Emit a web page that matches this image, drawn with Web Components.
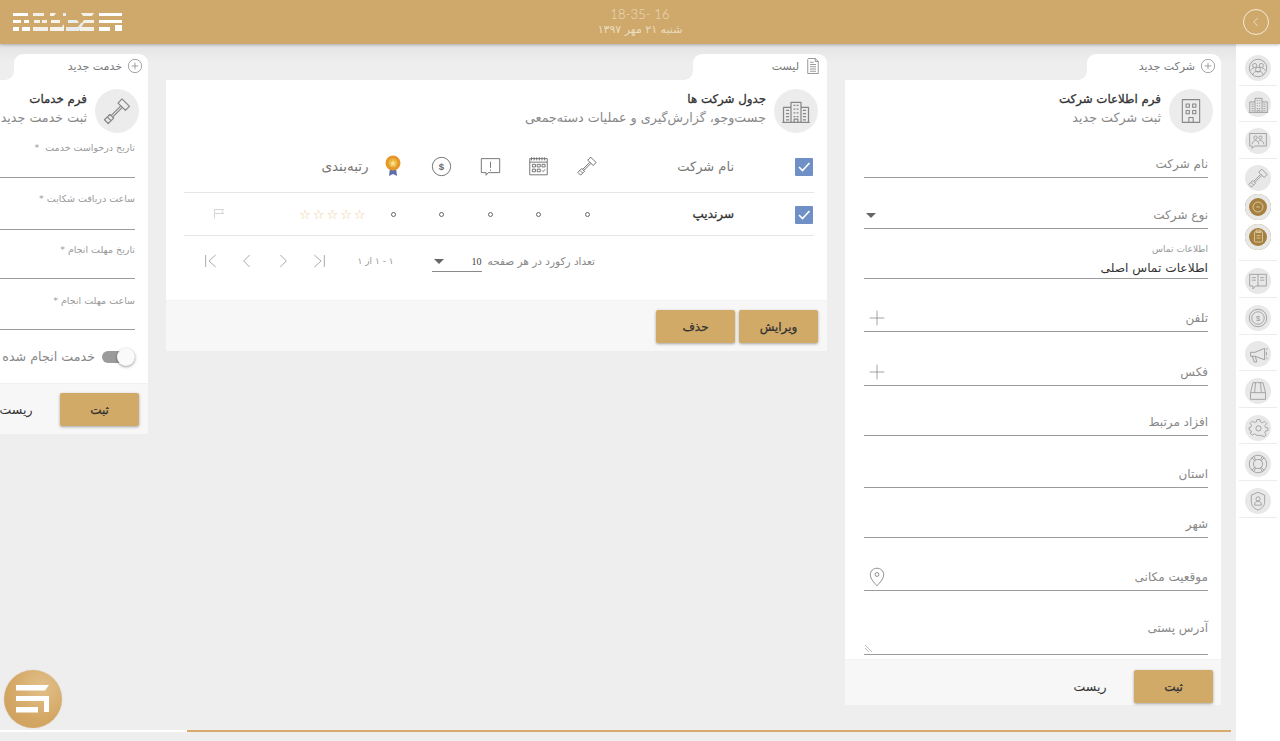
<!DOCTYPE html>
<html lang="fa">
<head>
<meta charset="utf-8">
<title>شرکت ها</title>
<style>
html,body{margin:0;height:741px;overflow:hidden;background:#eeeeee}
body{font-family:"DejaVu Sans",sans-serif;color:#444}
</style>
</head>
<body>
<crm-app></crm-app>
<script>
const ICONS={
hammer:'<path d="M12.800 5.700 16 2.300l6 6-3.300 3.100z"/><path d="M14.900 8.100 7.300 15.700M16.100 9.300 8.500 16.900"/><path d="M6.300 14.700 2 19l3 3 4.300-4.300zM4.500 17l2.500 2.500"/>',
plusc:'<circle cx="12" cy="12" r="10"/><path d="M12 7v10M7 12h10"/>',
doc:'<path d="M6 2h9l4 4v16H5V3z"/><path d="M15 2v4h4M8 7h5M8 10h8M8 13h8M8 16h8M8 19h8"/>',
towers:'<path d="M8 21V5h8v16M2 21V9h6M16 9h6v12M1 21h22"/><path d="M10 7.500h1.500M12.500 7.500H14M10 10.500h1.500M12.500 10.500H14M10 13.500h1.500M12.500 13.500H14M10 16.500h1.500M12.500 16.500H14M4 11.500h2.500M4 14h2.500M4 16.500h2.500M4 19h2.500M17.500 11.500H20M17.500 14H20M17.500 16.500H20M17.500 19H20M10.500 21v-2.500h3V21"/>',
building:'<path d="M4 1.500h16v21H4z"/><path d="M7.500 5.500h3v3h-3zM13.500 5.500h3v3h-3zM7.500 11.500h3v3h-3zM13.500 11.500h3v3h-3zM10 22.500v-4.500h4v4.500"/>',
users:'<circle cx="12" cy="12" r="10.500"/><circle cx="8" cy="9" r="2.500"/><circle cx="16" cy="9" r="2.500"/><circle cx="12" cy="14" r="3"/><path d="M6 20c0-3 3-4 6-4s6 1 6 4M3.500 15c.5-2 2-3 3.500-3M20.500 15c-.5-2-2-3-3.500-3"/>',
chatusers:'<path d="M2 3h20v15H8l-3 3v-3H2z"/><circle cx="9" cy="8" r="2"/><circle cx="15" cy="8" r="2"/><path d="M5 16c0-3 2-4.500 4-4.500s4 1.500 4 4.500M12.500 12.500c.7-.7 1.500-1 2.500-1 2 0 4 1.500 4 4.500"/>',
coin:'<circle cx="12" cy="12" r="6"/><path d="M10 12h4"/>',
clip:'<rect x="7" y="6" width="10" height="13" rx="1"/><path d="M9 4h6v3H9zM9.500 11h5M9.500 14h5"/>',
book:'<path d="M2 4h20v14H9l-3 3.500V18H2zM12 4v14"/><path d="M4.500 8h5M4.500 11h5M14.500 8h5M14.500 11h5"/>',
dollar:'<circle cx="12" cy="12" r="10.500"/><text x="12" y="16" font-size="11" font-weight="700" font-family="Liberation Sans" text-anchor="middle" fill="currentColor" stroke="none">$</text>',
dollar2:'<circle cx="12" cy="12" r="10.500"/><circle cx="12" cy="12" r="7.500"/><text x="12" y="15.500" font-size="9" font-family="Liberation Sans" text-anchor="middle" fill="currentColor" stroke="none">$</text>',
mega:'<path d="M3 9.500h5L19 5v13L8 14H3z"/><path d="M5 14l2 6.500h3L8.500 14.500M21 9v4M20.500 6.500l2-1.500M20.500 15.500l2 1.500"/>',
box:'<path d="M6 2h12l3 12v8H3v-8zM3 14h18M9 2l-1 12M15 2l1 12"/>',
gear:'<path d="M10 2h4l.6 3 2.400 1 2.600-1.700 2.800 2.800L20 9.700l1 2.300 3 .4v3.400l-3 .6-1 2.400 1.700 2.600-2.800 2.800L17.300 22l-2.300 1-.6-1h-4.800l-.6-1-2.300-1-2.600 1.700-2.800-2.800L3.100 18l-1-2.400-2-.6V12l2-.4 1-2.300L1.400 6.700l2.800-2.800L6.800 5.600 9.400 5z" transform="translate(1.200 1.200) scale(.9)"/><circle cx="12" cy="13" r="3"/>',
buoy:'<circle cx="12" cy="12" r="10.500"/><circle cx="12" cy="12" r="5.500"/><path d="m4.600 4.600 3.500 3.500M19.400 4.600l-3.500 3.500M4.600 19.400l3.500-3.500M19.400 19.400l-3.500-3.500M7 2.800l2 4.400M17 2.800l-2 4.400M7 21.200l2-4.400M17 21.200l-2-4.400"/>',
shield:'<path d="M12 1.500 20 5v8c0 5-3.500 8-8 10-4.500-2-8-5-8-10V5z"/><circle cx="12" cy="9.500" r="2.500"/><path d="M8 17v-1.500c0-2 1.800-3 4-3s4 1 4 3V17z"/>',
calendar:'<rect x="2" y="3" width="20" height="18.500"/><path d="M2 7h20M4 1.500V5M7 1.500V5M10 1.500V5M13 1.500V5M16 1.500V5M19 1.500V5"/><path d="M5 9.500h3.500v3H5zM10.500 9.500H14v3h-3.500zM16 9.500h3.500v3H16zM5 15h3.500v3H5zM10.500 15H14v3h-3.500zM16 16.500l1.300 1.300 2.200-2.600"/>',
alert:'<path d="M1.500 3h21v16H9.500l-2.500 3v-3H1.500z"/><path d="M12 6.500v7M12 15.500v1.500"/>',
flag:'<path d="M3 3h18l-3 4 3 4H4M3 3v18"/>',
pin:'<path d="M12 1.500c-4.500 0-8 3.300-8 7.700 0 5 4.500 9.500 8 13.300 3.500-3.800 8-8.300 8-13.300 0-4.400-3.500-7.700-8-7.700z"/><circle cx="12" cy="9" r="2.300"/>',
plus:'<path d="M12 1v22M1 12h22"/>',
first:'<path d="M4 3v18M19 3 9 12l10 9"/>',
prev:'<path d="M16 3 7 12l9 9"/>',
next:'<path d="m8 3 9 9-9 9"/>',
last:'<path d="M20 3v18M5 3l10 9-10 9"/>',
chev:'<path d="m14.500 6-6 6 6 6"/>'
};
function shadow(el,html){el.attachShadow({mode:'open'}).innerHTML=html;}

class SIcon extends HTMLElement{
  connectedCallback(){
    if(this.shadowRoot)return;
    const s=this.getAttribute('size')||20, w=this.getAttribute('sw')||1;
    shadow(this,`<style>:host{display:inline-flex;flex:none;line-height:0;color:inherit}svg{fill:none;stroke:currentColor;stroke-width:${w};stroke-linejoin:round}</style><svg width="${s}" height="${s}" viewBox="0 0 24 24">${ICONS[this.getAttribute('name')]||''}</svg>`);
  }
}
customElements.define('s-icon',SIcon);

class AppHeader extends HTMLElement{
  constructor(){super();shadow(this,`<style>
  :host{display:flex;flex:none;height:44px;background:#cfa96b;box-shadow:0 1px 3px rgba(0,0,0,.25);position:relative;z-index:3;align-items:center;justify-content:space-between;padding:0 11px 0 13px}
  .clock{display:flex;flex-direction:column;align-items:center;color:#ecdcbf;position:absolute;left:530px;width:220px;top:7px}
  .t{font:300 13px/15px Lato,"DejaVu Sans",sans-serif;letter-spacing:.1px;direction:ltr}
  .d{font-size:11px;line-height:16px;direction:rtl}
  .back{width:24px;height:24px;border:1px solid #f5ead6;border-radius:50%;color:#f5ead6;display:flex;align-items:center;justify-content:center}
  </style>
  <svg width="110" height="20" viewBox="0 0 110 20" fill="#fff">
   <path d="M0 1h15v3H0zM0 8h8v3H0zM11 8h5v3h-5zM0 15h6v4H0zM9 15h8v4H9z"/>
   <path d="M20 1h11v3H20zM21 8h6v3h-6zM29 8h5v3h-5zM20 15h15v4H20z" fill="#f3f0ea"/>
   <path d="M37 1h6l-2 3h-4zM38 8h9v3H38zM37 15h12l2-3v7H37z" fill="#f8f4ec"/>
   <path d="M50 1h3v3h-3zM55 8h9l2 3H55zM53 15h12l3-4h3l-5 8H53z" fill="#e9ecef"/>
   <path d="M68 1h13l-2 3H70zM71 8h10v3H69zM67 15h14v4H67z" fill="#f4f1ea"/>
   <path d="M86 1h23v3H86zM86 8h23v3H86zM86 15h11v4H86zM102 13h7v6h-7z"/>
  </svg>
  <div class="clock"><div class="t">18-35- 16</div><div class="d">شنبه ۲۱ مهر ۱۳۹۷</div></div>
  <div class="back"><s-icon name="chev" size="16" sw="1.200"></s-icon></div>`);}
}
customElements.define('app-header',AppHeader);

class SideItem extends HTMLElement{
  constructor(){super();shadow(this,`<style>
  :host{display:flex;height:var(--h,36.600px);align-items:center;justify-content:center;box-sizing:border-box;border-bottom:1px solid var(--line,#ececec);color:#979797;margin:0 3px;padding-top:var(--pt,2px)}
  .c{width:26px;height:26px;border-radius:50%;background:#e8e8e8;display:flex;align-items:center;justify-content:center;flex:none}
  :host([gold]) .c{box-shadow:inset 0 0 0 4px #e8e8e8;background:#a5803f;color:#e6d5b4}
  </style><div class="c"><slot></slot></div>`);}
}
customElements.define('side-item',SideItem);

class AppSidebar extends HTMLElement{
  constructor(){super();shadow(this,`<style>
  :host{display:block;flex:none;width:44px;background:#fff;box-sizing:border-box;padding-top:5px;position:relative;z-index:1}
  </style><slot></slot>`);}
}
customElements.define('app-sidebar',AppSidebar);

class AppCard extends HTMLElement{
  constructor(){super();shadow(this,`<style>
  :host{display:flex;flex-direction:column;flex:none;width:var(--w);box-sizing:border-box;direction:rtl}
  .tab{align-self:flex-start;width:134px;height:26px;box-sizing:border-box;background:#fff;border-radius:9px 9px 0 0;display:flex;align-items:center;gap:5px;padding:0 5px 2px 0;color:#777;font-size:11px;position:relative}
  .tab::after{content:"";position:absolute;left:-9px;bottom:0;width:9px;height:9px;background:radial-gradient(circle at 0 0,transparent 8.500px,#fff 9px)}
  .tab s-icon{color:#666}
  .body{background:#fff;display:flex;flex-direction:column}
  .head{display:flex;align-items:center;height:44px;gap:8px;padding:9px var(--fp,9px) 0 0}
  .c{width:44px;height:44px;border-radius:50%;background:#ececec;display:flex;align-items:center;justify-content:center;color:#888;flex:none}
  .titles{white-space:nowrap;margin-top:-4px}
  .t{font-size:11.800px;line-height:18px;color:#333;-webkit-text-stroke:.3px #333}
  .s{font-size:12.700px;line-height:20px;color:#888}
  .foot{background:#f7f7f7;display:flex;align-items:flex-start;gap:4px;height:var(--fh,51px);box-sizing:border-box;padding:var(--ft,9px) var(--fp,9px) 0;border-top:1px solid #f2f2f2}
  </style>
  <div class="tab"><slot name="tab"></slot></div>
  <div class="body">
    <div class="head"><div class="c"><slot name="icon"></slot></div><div class="titles"><div class="t"><slot name="title"></slot></div><div class="s"><slot name="sub"></slot></div></div></div>
    <slot></slot>
    <div class="foot"><slot name="foot"></slot></div>
  </div>`);}
}
customElements.define('app-card',AppCard);

class FormField extends HTMLElement{
  constructor(){super();shadow(this,`<style>
  :host{display:flex;flex-direction:column;justify-content:flex-end;height:var(--h);box-sizing:border-box;margin:0 var(--mr,13px) 0 var(--ml,13px);border-bottom:1px solid #9b9b9b;position:relative;color:#888;font-size:12px;direction:rtl}
  .row{display:flex;align-items:center;justify-content:space-between;height:24px;padding-bottom:1px}
  .a{color:#777;display:flex;line-height:0;margin-left:var(--em,0)}
  :host([small]){font-size:9.500px;justify-content:flex-start}
  :host([small]) .row{height:14px;color:#999;padding:0}
  :host([filled]) .row{height:18px;color:#333;font-size:12.200px}
  :host([area]) .row{height:32px;align-items:flex-start}
  :host([area]) .a{align-self:flex-end}
  .over{position:absolute;top:14px;right:0;font-size:9px;color:#999;line-height:12px}
  </style><div class="row"><span><slot></slot></span><span class="a"><slot name="end"></slot></span></div><div class="over"><slot name="over"></slot></div>`);}
}
customElements.define('form-field',FormField);

class GoldButton extends HTMLElement{
  constructor(){super();shadow(this,`<style>
  :host{display:flex;align-items:center;justify-content:center;width:var(--bw,79px);height:33px;border-radius:2px;background:#d2aa68;color:#333;font-size:12px;-webkit-text-stroke:.25px #333;flex:none;box-shadow:0 1px 3px rgba(0,0,0,.35)}
  :host([flat]){background:transparent;box-shadow:none;-webkit-text-stroke:0;font-size:12.500px}
  </style><slot></slot>`);}
}
customElements.define('gold-button',GoldButton);

class CheckBox extends HTMLElement{
  constructor(){super();shadow(this,`<style>:host{display:block;width:18px;height:18px;background:#6f8fc7;border-radius:1px}svg{display:block}</style><svg width="18" height="18" viewBox="0 0 18 18"><path d="m4 9 3.500 3.500L14.500 5" fill="none" stroke="#fff" stroke-width="1.600"/></svg>`);}
}
customElements.define('check-box',CheckBox);

class DataTable extends HTMLElement{
  constructor(){super();
    const tools=['hammer','calendar','alert','dollar'];
    shadow(this,`<style>
    :host{display:block;margin:10px 13px 0 18px;color:#777;direction:rtl}
    .r{display:grid;grid-template-columns:80px 123px repeat(5,48.500px) 129px 1fr;align-items:center;border-bottom:1px solid #e5e5e5;box-sizing:border-box}
    .h{height:50px;padding-bottom:3px}.b{height:43px}
    .cb{padding:2px 0 0 0;display:flex;justify-content:flex-start;margin-right:1px}
    .n{font-size:13px;color:#777;text-align:right}
    .b .n{color:#333;font-size:12px;-webkit-text-stroke:.3px #333}
    .i{display:flex;justify-content:center;color:#666;margin-right:-1px}
    .rt{font-size:13.500px;text-align:right;color:#777;white-space:nowrap}
    .dot{width:5px;height:5px;border:1.500px solid #666;border-radius:50%;box-sizing:border-box}
    .st{color:#edcb8e;font:13px/13px "DejaVu Sans",sans-serif;letter-spacing:2px;white-space:nowrap;margin-right:1px}
    .fl{color:#aaa;display:flex;justify-content:flex-start;padding-right:15px}
    </style>
    <div class="r h">
      <div class="cb"><check-box></check-box></div><div class="n">نام شرکت</div>
      ${tools.map(t=>`<div class="i"><s-icon name="${t}" size="${t==='hammer'?22:21}"></s-icon></div>`).join('')}
      <div class="i"><svg width="16" height="22" viewBox="0 0 16 22"><path d="M5 13l-1 8 4-2 4 2-1-8z" fill="#5d6fa8"/><circle cx="8" cy="8" r="7.500" fill="#e8962c"/><circle cx="8" cy="8" r="4.500" fill="#e9b93f"/><path d="M8 5l1 2.200 2 .3-1.500 1.500.4 2L8 10l-1.900 1 .4-2L5 7.500l2-.3z" fill="#f7e48f"/></svg></div>
      <div class="rt">رتبه‌بندی</div><div></div>
    </div>
    <div class="r b">
      <div class="cb"><check-box></check-box></div><div class="n">سرندیپ</div>
      ${[0,1,2,3,4].map(()=>'<div class="i"><span class="dot"></span></div>').join('')}
      <div class="st">☆☆☆☆☆</div>
      <div class="fl"><s-icon name="flag" size="12"></s-icon></div>
    </div>`);}
}
customElements.define('data-table',DataTable);

class TablePager extends HTMLElement{
  constructor(){super();shadow(this,`<style>
  :host{display:flex;align-items:center;height:64px;padding:0 232px 14px 0;color:#888;font-size:10.500px;direction:rtl;box-sizing:border-box}
  .sel{display:flex;justify-content:space-between;align-items:center;width:50px;height:20px;border-bottom:1px solid #8a8a8a;margin-right:6px;box-sizing:border-box;margin-top:1px}
  .v{font:10px "Liberation Serif",serif;color:#444}
  .ar{width:0;height:0;border:5px solid transparent;border-top:5px solid #666;border-bottom:0;margin-left:2px}
  .rng{margin-right:38px;width:36px;text-align:center;white-space:nowrap;color:#999;font-size:9px}
  .ic{display:flex;gap:20px;margin-right:31px;color:#aaa}
  </style>
  <span>تعداد رکورد در هر صفحه</span>
  <div class="sel"><span class="v">10</span><span class="ar"></span></div>
  <span class="rng">۱ - ۱ از ۱</span>
  <div class="ic"><s-icon name="last" size="16" sw="1.500"></s-icon><s-icon name="next" size="16" sw="1.500"></s-icon><s-icon name="prev" size="16" sw="1.500"></s-icon><s-icon name="first" size="16" sw="1.500"></s-icon></div>`);}
}
customElements.define('table-pager',TablePager);

class ToggleRow extends HTMLElement{
  constructor(){super();shadow(this,`<style>
  :host{display:flex;align-items:center;gap:7px;height:53px;padding-right:13px;color:#888;font-size:12.700px;white-space:nowrap;direction:rtl;box-sizing:border-box}
  .sw{width:33px;height:18px;position:relative;flex:none}
  .tr{position:absolute;left:0;right:0;top:3px;height:12px;border-radius:6px;background:#9b9b9b}
  .th{position:absolute;left:15px;top:0;width:18px;height:18px;border-radius:50%;background:#fafafa;box-shadow:0 1px 3px rgba(0,0,0,.4)}
  </style><div class="sw"><span class="tr"></span><span class="th"></span></div><span><slot></slot></span>`);}
}
customElements.define('toggle-row',ToggleRow);

class AppFab extends HTMLElement{
  constructor(){super();shadow(this,`<style>
  :host{position:absolute;left:4px;top:670px;width:58px;height:58px;border-radius:50%;background:radial-gradient(circle at 65% 30%,#e2c08a,#d3a663 60%,#cf9f5d);box-shadow:0 0 2px rgba(0,0,0,.1);display:flex;align-items:center;justify-content:center;z-index:4}
  </style><svg width="34" height="28" viewBox="0 0 34 28" fill="#fff"><path d="M0 0h33l-4 5.500H0zM0 11h33v16h-5V16H0zM0 22h22v5.500H0z"/></svg>`);}
}
customElements.define('app-fab',AppFab);

class CrmApp extends HTMLElement{
  constructor(){super();shadow(this,`<style>
  :host{display:flex;flex-direction:column;height:741px;overflow:hidden;position:relative;background:#eeeeee}
  .main{display:flex;flex:1;min-height:0;direction:ltr}
  .content{flex:1;min-width:0;display:flex;flex-direction:column;overflow:hidden;background:linear-gradient(#e4e4e4,#eeeeee 20px)}
  .cards{flex:1;min-height:0;display:flex;direction:rtl;gap:18px;padding:10px 15px 0 0;overflow:hidden;align-items:flex-start}
  .strip{flex:none;height:2px;margin-bottom:9px;display:flex;margin-right:5px}
  .w{width:187px;background:#fff}.g{flex:1;background:#d8ab6a}
  .form{display:flex;flex-direction:column}
  </style>
  <app-header></app-header>
  <div class="main">
    <div class="content">
      <div class="cards">
        <app-card style="--w:376px;--fh:46px;--fp:8px;--ft:10px">
          <s-icon slot="tab" name="plusc" size="16"></s-icon><span slot="tab">شرکت جدید</span>
          <s-icon slot="icon" name="building" size="26"></s-icon>
          <span slot="title">فرم اطلاعات شرکت</span><span slot="sub">ثبت شرکت جدید</span>
          <div class="form" style="--mr:13px;--ml:19px;min-height:526px">
            <form-field style="--h:45px">نام شرکت</form-field>
            <form-field style="--h:51px">نوع شرکت<span slot="end" style="width:0;height:0;border:5px solid transparent;border-top:5px solid #666;border-bottom:0;margin-left:2px;align-self:center"></span></form-field>
            <form-field style="--h:50px" filled><span slot="over">اطلاعات تماس</span>اطلاعات تماس اصلی</form-field>
            <form-field style="--h:53px;--em:5px">تلفن<s-icon slot="end" name="plus" size="16"></s-icon></form-field>
            <form-field style="--h:54px;--em:5px">فکس<s-icon slot="end" name="plus" size="16"></s-icon></form-field>
            <form-field style="--h:50px">افزاد مرتبط</form-field>
            <form-field style="--h:52px">استان</form-field>
            <form-field style="--h:50px">شهر</form-field>
            <form-field style="--h:53px;--em:3px">موقعیت مکانی<s-icon slot="end" name="pin" size="20"></s-icon></form-field>
            <form-field area style="--h:64px">آدرس پستی<svg slot="end" width="9" height="9" viewBox="0 0 9 9" fill="none" stroke="#999" stroke-width=".7"><path d="M1 1l7 7M1 4l4 4"/></svg></form-field>
            <div style="height:4px"></div>
          </div>
          <gold-button slot="foot">ثبت</gold-button><gold-button slot="foot" flat style="--bw:80px">ریست</gold-button>
        </app-card>

        <app-card style="--w:661px">
          <s-icon slot="tab" name="doc" size="18"></s-icon><span slot="tab">لیست</span>
          <s-icon slot="icon" name="towers" size="30"></s-icon>
          <span slot="title">جدول شرکت ها</span><span slot="sub">جست‌وجو، گزارش‌گیری و عملیات دسته‌جمعی</span>
          <data-table></data-table>
          <table-pager></table-pager>
          <gold-button slot="foot">ویرایش</gold-button><gold-button slot="foot">حذف</gold-button>
        </app-card>

        <app-card style="--w:376px">
          <s-icon slot="tab" name="plusc" size="16"></s-icon><span slot="tab">خدمت جدید</span>
          <s-icon slot="icon" name="hammer" size="30"></s-icon>
          <span slot="title">فرم خدمات</span><span slot="sub">ثبت خدمت جدید</span>
          <div class="form" style="--mr:13px;--ml:0px">
            <form-field small style="--h:45px;padding-top:7px">تاریخ درخواست خدمت &nbsp;*</form-field>
            <form-field small style="--h:52px;padding-top:13px">ساعت دریافت شکایت *</form-field>
            <form-field small style="--h:49px;padding-top:12px">تاریخ مهلت انجام *</form-field>
            <form-field small style="--h:51px;padding-top:14px">ساعت مهلت انجام *</form-field>
            <toggle-row>خدمت انجام شده</toggle-row>
          </div>
          <gold-button slot="foot">ثبت</gold-button><gold-button slot="foot" flat style="--bw:80px">ریست</gold-button>
        </app-card>
      </div>
      <div class="strip"><div class="w"></div><div class="g"></div></div>
    </div>
    <app-sidebar>
      <side-item><s-icon name="users" size="20"></s-icon></side-item>
      <side-item><s-icon name="towers" size="21"></s-icon></side-item>
      <side-item><s-icon name="chatusers" size="20"></s-icon></side-item>
      <side-item style="--line:transparent"><s-icon name="hammer" size="22"></s-icon></side-item>
      <side-item gold style="--h:24px;--line:transparent;--pt:0"><s-icon name="coin" size="20"></s-icon></side-item>
      <side-item gold style="--h:36px;--line:transparent;--pt:0"><s-icon name="clip" size="19"></s-icon></side-item>
      <div style="height:6px;margin:0 3px;border-bottom:1px solid #ececec;box-sizing:border-box"></div>
      <side-item style="--pt:4px"><s-icon name="book" size="20"></s-icon></side-item>
      <side-item style="--pt:4px"><s-icon name="dollar2" size="20"></s-icon></side-item>
      <side-item style="--pt:4px"><s-icon name="mega" size="21"></s-icon></side-item>
      <side-item style="--pt:4px"><s-icon name="box" size="20"></s-icon></side-item>
      <side-item style="--pt:4px"><s-icon name="gear" size="21"></s-icon></side-item>
      <side-item style="--pt:4px"><s-icon name="buoy" size="20"></s-icon></side-item>
      <side-item style="--pt:4px"><s-icon name="shield" size="20"></s-icon></side-item>
    </app-sidebar>
  </div>
  <app-fab></app-fab>`);}
}
customElements.define('crm-app',CrmApp);
</script>
</body>
</html>
